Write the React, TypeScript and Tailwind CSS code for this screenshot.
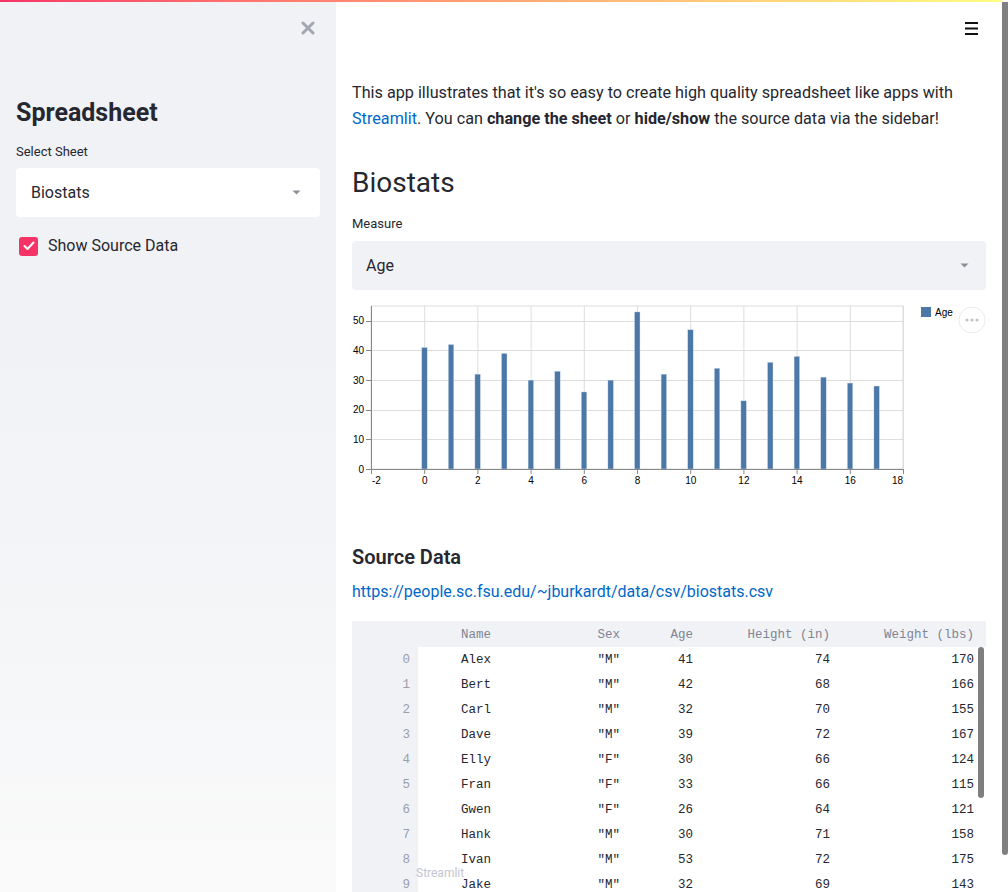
import React from "react";

const ages = [41, 42, 32, 39, 30, 33, 26, 30, 53, 32, 47, 34, 23, 36, 38, 31, 29, 28];
const rows: [string, string, number, number, number][] = [
  ["Alex", "M", 41, 74, 170],
  ["Bert", "M", 42, 68, 166],
  ["Carl", "M", 32, 70, 155],
  ["Dave", "M", 39, 72, 167],
  ["Elly", "F", 30, 66, 124],
  ["Fran", "F", 33, 66, 115],
  ["Gwen", "F", 26, 64, 121],
  ["Hank", "M", 30, 71, 158],
  ["Ivan", "M", 53, 72, 175],
  ["Jake", "M", 32, 69, 143],
  ["Kate", "F", 47, 69, 139],
  ["Luke", "M", 34, 72, 163],
];

const SANS = "font-['Roboto','Noto_Sans',sans-serif]";

function Caret() {
  return (
    <svg width="9" height="5" viewBox="0 0 9 5">
      <path d="M0.5 0.5 L8.5 0.5 L4.5 4.5 Z" fill="#8c8f99" />
    </svg>
  );
}

function Chart() {
  const L = 19, R = 551, T = 10, B = 173;
  const xs = (v: number) => L + ((v + 2) * (R - L)) / 20;
  const ys = (v: number) => B - (v * (B - T)) / 55;
  const xTicks = [-2, 0, 2, 4, 6, 8, 10, 12, 14, 16, 18];
  const yTicks = [0, 10, 20, 30, 40, 50];
  const font = "Liberation Sans, Arial, sans-serif";
  return (
    <svg width="634" height="200" viewBox="0 0 634 200" className="block">
      <rect x={L} y={T} width={R - L} height={B - T} fill="white" stroke="#dddddd" strokeWidth="1" />
      {xTicks.map((t) => (
        <line key={"gx" + t} x1={xs(t) + 0.5} x2={xs(t) + 0.5} y1={T} y2={B} stroke="#dddddd" />
      ))}
      {yTicks.map((t) => (
        <line key={"gy" + t} x1={L} x2={R} y1={Math.round(ys(t)) + 0.5} y2={Math.round(ys(t)) + 0.5} stroke="#dddddd" />
      ))}
      {ages.map((a, i) => (
        <rect key={"b" + i} x={xs(i) - 2.5} y={ys(a)} width={5.5} height={B - ys(a)} fill="#4c78a8" stroke="#d6e2ef" strokeWidth="0.4" />
      ))}
      <line x1={L} x2={R + 1} y1={B + 0.5} y2={B + 0.5} stroke="#888888" />
      <line x1={L + 0.5} x2={L + 0.5} y1={T} y2={B} stroke="#888888" />
      {xTicks.map((t, i) => (
        <g key={"tx" + t}>
          <line x1={xs(t) + 0.5} x2={xs(t) + 0.5} y1={B} y2={B + 5} stroke="#888888" />
          <text
            x={i === 0 ? xs(t) + 1 : i === xTicks.length - 1 ? xs(t) : xs(t) + 0.5}
            y={B + 15}
            fontSize="10"
            textAnchor={i === 0 ? "start" : i === xTicks.length - 1 ? "end" : "middle"}
            fill="#000"
            fontFamily={font}
          >
            {t}
          </text>
        </g>
      ))}
      {yTicks.map((t) => (
        <g key={"ty" + t}>
          <line x1={L - 5} x2={L} y1={Math.round(ys(t)) + 0.5} y2={Math.round(ys(t)) + 0.5} stroke="#888888" />
          <text x={L - 7} y={ys(t) + 3.5} fontSize="10" textAnchor="end" fill="#000" fontFamily={font}>
            {t}
          </text>
        </g>
      ))}
      <rect x="569" y="11" width="10" height="10" fill="#4c78a8" />
      <text x="583" y="19.5" fontSize="10" fill="#000" fontFamily={font}>
        Age
      </text>
      <circle cx="620" cy="24" r="13" fill="white" stroke="#ececec" />
      <circle cx="615" cy="24" r="1.6" fill="#c4c4c4" />
      <circle cx="620" cy="24" r="1.6" fill="#c4c4c4" />
      <circle cx="625" cy="24" r="1.6" fill="#c4c4c4" />
    </svg>
  );
}

function Table() {
  const cols = "grid grid-cols-[66px_81px_129px_73px_137px_144px_1fr]";
  const cell = "pr-2 text-right";
  return (
    <div className="relative font-['Liberation_Mono','DejaVu_Sans_Mono',monospace] text-[12.5px]">
      <div className={`${cols} h-[26px] items-center bg-[#f0f2f6] pt-[2px] text-[#808495]`}>
        <div />
        <div className={cell}>Name</div>
        <div className={cell}>Sex</div>
        <div className={cell}>Age</div>
        <div className={cell}>Height (in)</div>
        <div className={cell}>Weight (lbs)</div>
        <div />
      </div>
      {rows.map((r, i) => (
        <div key={i} className={`${cols} h-[25px] items-center text-[#262730]`}>
          <div className={`${cell} flex h-full items-center justify-end bg-[#f0f2f6] pt-[1px] text-[#9a9eaa]`}>{i}</div>
          <div className={`${cell} pt-[1px]`}>{r[0]}</div>
          <div className={`${cell} pt-[1px]`}>"{r[1]}"</div>
          <div className={`${cell} pt-[1px]`}>{r[2]}</div>
          <div className={`${cell} pt-[1px]`}>{r[3]}</div>
          <div className={`${cell} pt-[1px]`}>{r[4]}</div>
          <div />
        </div>
      ))}
      <div className="absolute left-[626px] top-[26px] h-[151px] w-[6px] rounded-full bg-[#7f7f7f]" />
    </div>
  );
}

export default function App() {
  return (
    <div className={`relative flex h-[892px] w-[1008px] overflow-hidden bg-white ${SANS} text-[#262730]`}>
      <div className="absolute left-0 top-0 h-[2px] w-[1002px] bg-gradient-to-r from-[#f63366] to-[#fffd80]" />

      {/* Sidebar */}
      <aside className="w-[336px] shrink-0 bg-gradient-to-b from-[#f0f2f6] from-40% to-[#fafafa] px-4 pt-[21px]">
        <div className="flex h-[14px] justify-end pr-[5px]">
          <svg width="14" height="14" viewBox="0 0 14 14">
            <path d="M2 2 L12 12 M12 2 L2 12" stroke="#a3a6af" strokeWidth="3" strokeLinecap="round" />
          </svg>
        </div>
        <h1 className="mt-[61px] text-[25px] font-bold leading-[33px] text-[#262730]">Spreadsheet</h1>
        <div className="mt-[15px] text-[13px] leading-[16px]">Select Sheet</div>
        <div className="mt-[8px] flex h-[49px] items-center justify-between rounded-[4px] bg-white pl-[15px] pr-[19px]">
          <span className="text-[16px]">Biostats</span>
          <Caret />
        </div>
        <div className="mt-[19px] flex h-[20px] items-center gap-[10px] pl-[3px]">
          <div className="flex h-[19px] w-[19px] items-center justify-center rounded-[3px] bg-[#f63366]">
            <svg width="12" height="10" viewBox="0 0 12 10">
              <path d="M1.5 5 L4.5 8 L10.5 1.5" stroke="white" strokeWidth="2" fill="none" strokeLinecap="round" strokeLinejoin="round" />
            </svg>
          </div>
          <span className="text-[16px]">Show Source Data</span>
        </div>
      </aside>

      {/* Main */}
      <main className="relative w-[666px] shrink-0 px-4 pt-[80px]">
        <div className="absolute right-[24px] top-[22px]">
          <svg width="13" height="13" viewBox="0 0 13 13">
            <rect x="0" y="0" width="13" height="2" fill="#111" />
            <rect x="0" y="5.5" width="13" height="2" fill="#111" />
            <rect x="0" y="11" width="13" height="2" fill="#111" />
          </svg>
        </div>
        <p className="text-[16.2px] leading-[26px]">
          This app illustrates that it's so easy to create high quality spreadsheet like apps with{" "}
          <span className="text-[#0068c9]">Streamlit</span>. You can <b className="font-bold">change the sheet</b> or{" "}
          <b className="font-bold">hide/show</b> the source data via the sidebar!
        </p>
        <h2 className="mt-[31px] text-[28px] font-normal leading-[40px]">Biostats</h2>
        <div className="mt-[13px] text-[13px] leading-[16px]">Measure</div>
        <div className="mt-[9px] flex h-[49px] items-center justify-between rounded-[4px] bg-[#f0f2f6] pl-[14px] pr-[17px]">
          <span className="text-[16px]">Age</span>
          <Caret />
        </div>
        <div className="mt-[6px]">
          <Chart />
        </div>
        <h3 className="mt-[47px] text-[20px] font-semibold leading-[28px]">Source Data</h3>
        <div className="mt-[9px] text-[16px] leading-[24px] text-[#0068c9]">
          https://people.sc.fsu.edu/~jburkardt/data/csv/biostats.csv
        </div>
        <div className="mt-[17px]">
          <Table />
        </div>
        <div className="absolute left-[80px] top-[865px] text-[12px] leading-[16px] text-[#c3c5cf]">Streamlit</div>
      </main>

      {/* Page scrollbar */}
      <div className="w-[6px] shrink-0 bg-white">
        <div className="mt-[2px] h-[853px] w-[6px] rounded-b-full bg-[#808080]" />
      </div>
    </div>
  );
}
